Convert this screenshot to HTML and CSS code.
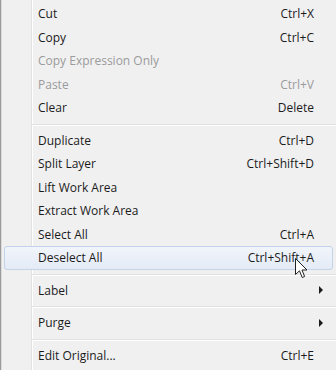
FILE: index.html
```html
<!DOCTYPE html>
<html>
<head>
<meta charset="utf-8">
<link rel="stylesheet" href="styles.css">
</head>
<body>
<div class="menu">
  <div class="item"><span>Cut</span><span class="key">Ctrl+X</span></div>
  <div class="item"><span>Copy</span><span class="key">Ctrl+C</span></div>
  <div class="item disabled"><span>Copy Expression Only</span><span class="key"></span></div>
  <div class="item disabled"><span>Paste</span><span class="key">Ctrl+V</span></div>
  <div class="item"><span>Clear</span><span class="key">Delete</span></div>
  <div class="sep"></div>
  <div class="item"><span>Duplicate</span><span class="key">Ctrl+D</span></div>
  <div class="item"><span>Split Layer</span><span class="key">Ctrl+Shift+D</span></div>
  <div class="item"><span>Lift Work Area</span><span class="key"></span></div>
  <div class="item"><span>Extract Work Area</span><span class="key"></span></div>
  <div class="item"><span>Select All</span><span class="key">Ctrl+A</span></div>
  <div class="item hover"><span>Deselect All</span><span class="key">Ctrl+Shift+A</span></div>
  <div class="sep"></div>
  <div class="item"><span>Label</span><span class="arrow"></span></div>
  <div class="sep"></div>
  <div class="item"><span>Purge</span><span class="arrow"></span></div>
  <div class="sep"></div>
  <div class="item"><span>Edit Original...</span><span class="key">Ctrl+E</span></div>
  <svg class="cursor" width="13" height="21" viewBox="0 0 13 21">
    <path d="M0.5 0.5 L0.5 16.5 L4.5 12.8 L7.2 19.5 L9.6 18.5 L7 12 L12 12 Z" fill="#fff" stroke="#222" stroke-width="1" stroke-linejoin="round"/>
  </svg>
</div>
</body>
</html>
```
FILE: styles.css
```css
html, body {
  margin: 0;
  padding: 0;
}
body {
  width: 336px;
  height: 370px;
  overflow: hidden;
  background: #f0f0f0;
  font-family: "Open Sans", "Noto Sans", sans-serif;
  font-size: 12px;
  color: #1b1b1b;
}
.menu {
  position: relative;
  height: 370px;
  padding-top: 2px;
  box-sizing: border-box;
  border-left: 1px solid #9a9a9a;
  box-shadow: inset 1px 0 0 #dcdcdc;
  background:
    linear-gradient(to right, transparent 30px, #e2e2e2 30px, #e2e2e2 31px, #ffffff 31px, #ffffff 32px, transparent 32px),
    #f0f0f1;
}
.item {
  height: 23.5px;
  display: flex;
  align-items: center;
  justify-content: space-between;
  padding: 0 22px 0 37px;
  box-sizing: border-box;
  white-space: nowrap;
}
.item.disabled {
  color: #9b9b9b;
}
.item.hover {
  margin: 0 3px 0 3px;
  padding: 0 18px 0 33px;
  border: 1px solid #c3d3ea;
  border-radius: 3px;
  background: linear-gradient(to bottom, #f1f5fb, #e4ebf6);
}
.sep {
  height: 9px;
  margin-left: 31px;
  background: linear-gradient(to bottom, transparent 4px, #e2e2e2 4px, #e2e2e2 5px, #ffffff 5px, #ffffff 6px, transparent 6px);
}
.arrow {
  width: 0;
  height: 0;
  margin-right: -9px;
  border-top: 4px solid transparent;
  border-bottom: 4px solid transparent;
  border-left: 4px solid #1b1b1b;
}
.cursor {
  position: absolute;
  left: 294px;
  top: 258px;
}
```
